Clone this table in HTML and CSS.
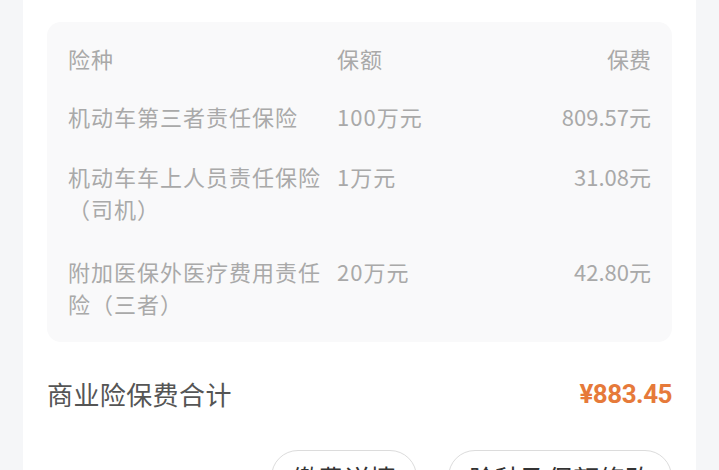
FILE: index.html
```html
<!DOCTYPE html>
<html lang="zh-CN">
<head>
  <meta charset="UTF-8">
  <meta name="viewport" content="width=device-width, initial-scale=1.0">
  <title>商业险保费</title>
  <link rel="stylesheet" href="styles.css">
</head>
<body>
  <div class="card">
    <div class="table">
      <div class="row head">
        <span>险种</span>
        <span>保额</span>
        <span class="fee">保费</span>
      </div>
      <div class="row">
        <span>机动车第三者责任保险</span>
        <span>100万元</span>
        <span class="fee">809.57元</span>
      </div>
      <div class="row">
        <span>机动车车上人员责任保险（司机）</span>
        <span>1万元</span>
        <span class="fee">31.08元</span>
      </div>
      <div class="row">
        <span>附加医保外医疗费用责任险（三者）</span>
        <span>20万元</span>
        <span class="fee">42.80元</span>
      </div>
    </div>

    <div class="total">
      <span class="label">商业险保费合计</span>
      <span class="price">¥883.45</span>
    </div>

    <div class="actions">
      <button>缴费详情</button>
      <button>险种及保额修改</button>
    </div>
  </div>
</body>
</html>
```

FILE: styles.css
```css
body {
  margin: 0;
  background: #f5f6f8;
  font-family: "Noto Sans CJK SC", "Noto Sans", sans-serif;
  overflow: hidden;
}
.card {
  margin: 0 23px;
  padding: 22px 24px 40px;
  background: #fff;
  min-height: 520px;
}
.table {
  background: #f9f9fa;
  border-radius: 14px;
  padding: 20px 21px 23px 21px;
  display: flex;
  flex-direction: column;
  gap: 28px;
}
.row {
  display: grid;
  grid-template-columns: 269px 1fr auto;
  font-size: 22px;
  line-height: 32px;
  letter-spacing: 1px;
  color: #a9a9a9;
}
.row.head { margin-bottom: -2px; }
.row:last-child { margin-top: 3px; }
.row span:first-child { padding-right: 10px; }
.row .fee { text-align: right; letter-spacing: 0; }
.total {
  display: flex;
  justify-content: space-between;
  align-items: center;
  margin-top: 34px;
  line-height: 36px;
}
.total .label {
  font-size: 26px;
  color: #555;
  letter-spacing: 0.4px;
}
.total .price {
  font-family: Roboto, sans-serif;
  font-weight: 700;
  font-size: 26px;
  color: #e67a3a;
  letter-spacing: -0.5px;
}
.actions {
  display: flex;
  justify-content: flex-end;
  gap: 31px;
  margin-top: 38px;
}
.actions button {
  height: 54px;
  padding: 0 20px;
  border: 1px solid #dcdcdc;
  border-radius: 27px;
  background: #fff;
  font-family: inherit;
  font-size: 26px;
  color: #333;
}
```
